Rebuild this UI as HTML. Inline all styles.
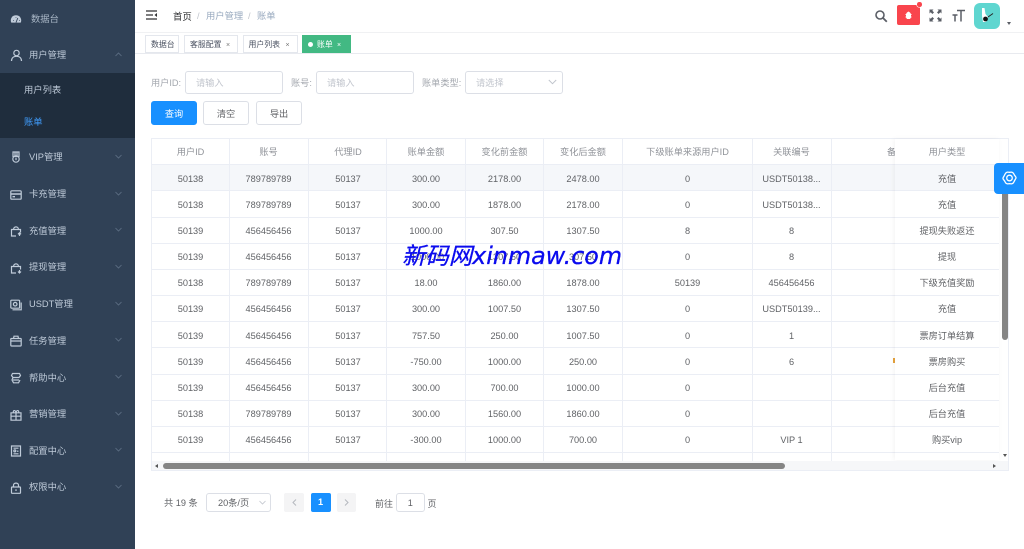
<!DOCTYPE html>
<html lang="zh"><head><meta charset="utf-8"><title>账单</title>
<style>
*{box-sizing:border-box}
html,body{margin:0;padding:0;width:1024px;height:549px;overflow:hidden;background:#fff}
body{font-family:"Liberation Sans","Noto Sans CJK SC",sans-serif;position:relative;color:#606266}
.a{position:absolute}
#root{position:absolute;left:0;top:0;width:1024px;height:549px;filter:blur(.35px)}
.side{left:0;top:0;width:135px;height:549px;background:#304156}
.sub{left:0;top:73px;width:135px;height:65px;background:#1f2d3d}
.m{position:absolute;left:29px;font-size:9.3px;line-height:14px;color:#bfcbd9;white-space:nowrap}
.ic{position:absolute;left:10px;width:12px;height:12px;fill:none;stroke:#bfcbd9;stroke-width:1.2}
.ch{position:absolute;left:115px;width:7px;height:5px;fill:none;stroke:#5f7186;stroke-width:.8}
.tag{position:absolute;top:35px;height:17.5px;border:1px solid #e4e7ed;background:#fff;font-size:7.9px;line-height:17px;color:#495060;padding-left:5px;white-space:nowrap}
.x{font-size:7px;color:#777;position:absolute;top:1px}
.lab{position:absolute;top:76px;font-size:9.2px;line-height:15px;color:#a3a7ae;white-space:nowrap}
.inp{position:absolute;top:71px;height:23px;border:1px solid #dcdfe6;border-radius:3px;font-size:9.2px;line-height:23px;color:#c0c4cc;padding-left:10px;background:#fff}
.btn{position:absolute;top:101px;width:46px;height:24px;border:1px solid #dcdfe6;border-radius:3px;font-size:9.2px;line-height:24px;text-align:center;color:#606266;background:#fff}
.tb{left:151px;top:138px;width:858px;height:333px;border:1px solid #ebeef5;overflow:hidden}
.r{position:absolute;left:151px;width:848px;height:1px;background:#ebeef5}
.v{position:absolute;top:139px;width:1px;height:322px;background:#ebeef5}
.row{position:absolute;left:152px;width:847px;height:14px;font-size:9.2px;line-height:14px;color:#606266}
.row span{position:absolute;top:0;text-align:center;white-space:nowrap}
.f{left:895px;width:104px;text-align:center}
.h{color:#909399}
.c1{left:0;width:77px}.c2{left:77px;width:79px}.c3{left:157px;width:78px}.c4{left:235px;width:78px}.c5{left:313px;width:79px}.c6{left:392px;width:78px}.c7{left:470px;width:131px}.c8{left:600px;width:79px}
.pg{position:absolute;top:493px;height:19px;font-size:9.2px;line-height:19px;text-align:center;border-radius:2px}
</style></head><body>
<div id="root">
<div class="a side"></div><div class="a sub"></div>

<svg class="ic" style="top:13px" viewBox="0 0 12 12"><path fill="#bfcbd9" stroke="none" d="M6 2.2C2.8 2.2.8 4.6.8 7.4c0 .9.2 1.6.5 2.2h9.4c.3-.6.5-1.3.5-2.2C11.200 4.6 9.2 2.2 6 2.2z"/><path stroke="#304156" stroke-width=".9" d="M6 9.5 7.8 5M3 7.5h.6M9 7.5h.6M6 4v.6"/></svg>
<div class="m" style="left:31px;top:11.5px;color:#a9b7c6">数据台</div>

<svg class="ic" style="top:49px;width:13px;height:13px" viewBox="0 0 13 13"><circle cx="6.5" cy="4" r="2.7"/><path d="M1.5 12c0-3 2-4.7 5-4.7s5 1.7 5 4.700"/></svg>
<div class="m" style="top:48px">用户管理</div>
<svg class="ch" style="top:52px" viewBox="0 0 7 5"><path d="M.5 4 3.5 1 6.5 4"/></svg>

<div class="m" style="left:24px;top:82.5px">用户列表</div>
<div class="m" style="left:24px;top:115px;color:#409eff">账单</div>

<svg class="ic" style="top:151px" viewBox="0 0 12 12"><path d="M3 1h6v4.5H3zM5 1v4.5M7 1v4.5"/><circle cx="6" cy="8" r="3.2"/><path d="M6 6.8v2.4"/></svg>
<div class="m" style="top:150px">VIP管理</div>
<svg class="ch" style="top:153.5px" viewBox="0 0 7 5"><path d="M.5 1 3.5 4 6.5 1"/></svg>

<svg class="ic" style="top:188.5px" viewBox="0 0 12 12"><rect x=".8" y="1.8" width="10.4" height="8.4" rx="1"/><path d="M.8 5h10.4M2.5 7.7h2.5" stroke-width="1.4"/></svg>
<div class="m" style="top:187px">卡充管理</div>
<svg class="ch" style="top:190.5px" viewBox="0 0 7 5"><path d="M.5 1 3.5 4 6.5 1"/></svg>

<svg class="ic" style="top:225px" viewBox="0 0 12 12"><path d="M6 11H1.5V4.5H10.5V7.5M3.5 4.5C3.5 1 8.5 1 8.5 4.5M9.5 11V8M8 9.300l1.5-1.5 1.5 1.5"/></svg>
<div class="m" style="top:223.5px">充值管理</div>
<svg class="ch" style="top:227px" viewBox="0 0 7 5"><path d="M.5 1 3.5 4 6.5 1"/></svg>

<svg class="ic" style="top:262px" viewBox="0 0 12 12"><path d="M6 11H1.5V4.5H10.5V7.5M3.5 4.5C3.5 1 8.5 1 8.5 4.5M9.5 8V11M8 9.5l1.5 1.5 1.5-1.5"/></svg>
<div class="m" style="top:260px">提现管理</div>
<svg class="ch" style="top:263.5px" viewBox="0 0 7 5"><path d="M.5 1 3.5 4 6.5 1"/></svg>

<svg class="ic" style="top:298.5px" viewBox="0 0 12 12"><rect x=".8" y="1.2" width="8.8" height="8" rx=".8"/><path d="M2.5 10.8h8.7V3.5"/><circle cx="5.2" cy="5.2" r="1.8"/></svg>
<div class="m" style="top:297px">USDT管理</div>
<svg class="ch" style="top:300.5px" viewBox="0 0 7 5"><path d="M.5 1 3.5 4 6.5 1"/></svg>

<svg class="ic" style="top:335px" viewBox="0 0 12 12"><rect x=".8" y="3.5" width="10.4" height="7.5" rx=".6"/><path d="M3.5 3.5 4 1.2h4L8.5 3.5M.8 6h10.4"/></svg>
<div class="m" style="top:333.5px">任务管理</div>
<svg class="ch" style="top:337px" viewBox="0 0 7 5"><path d="M.5 1 3.5 4 6.5 1"/></svg>

<svg class="ic" style="top:372px" viewBox="0 0 12 12"><path d="M2.5 1.5h7l1 2-1.5 2H3L1.5 3.5zM3 5.5l-1 2.5 1.5 2.8h5L10 8"/><path d="M3 8h6"/></svg>
<div class="m" style="top:370.5px">帮助中心</div>
<svg class="ch" style="top:373.5px" viewBox="0 0 7 5"><path d="M.5 1 3.5 4 6.5 1"/></svg>

<svg class="ic" style="top:409px" viewBox="0 0 12 12"><path d="M1 3.8h10v7.400H1zM1 7.2h10M6 3.8v7.400M3.5 3.8C2.5 1 5.5.6 6 3.8 6.5.6 9.5 1 8.5 3.8"/></svg>
<div class="m" style="top:407px">营销管理</div>
<svg class="ch" style="top:410.5px" viewBox="0 0 7 5"><path d="M.5 1 3.5 4 6.5 1"/></svg>

<svg class="ic" style="top:445px" viewBox="0 0 12 12"><path d="M1.5 1h9v10h-9zM3.5 3.2h5M3.5 8.8h5"/><circle cx="4.8" cy="5.9" r="1"/><path d="M7 6.2h1.5"/></svg>
<div class="m" style="top:443.5px">配置中心</div>
<svg class="ch" style="top:447px" viewBox="0 0 7 5"><path d="M.5 1 3.5 4 6.5 1"/></svg>

<svg class="ic" style="top:482px" viewBox="0 0 12 12"><rect x="1.5" y="5" width="9" height="6.3" rx=".6"/><path d="M3.5 5V3.2C3.5.4 8.5.4 8.5 3.2V5M6 7.3v1.7"/></svg>
<div class="m" style="top:480px">权限中心</div>
<svg class="ch" style="top:483.5px" viewBox="0 0 7 5"><path d="M.5 1 3.5 4 6.5 1"/></svg>

<!-- header -->
<svg class="a" style="left:146px;top:10px;width:11px;height:10px" viewBox="0 0 11 10"><path d="M0 1h11M0 5h7M0 9h11" stroke="#303133" stroke-width="1.3" fill="none"/><path d="M11 3 8.500 5 11 7z" fill="#303133"/></svg>
<div class="a" style="left:173px;top:9px;font-size:9.4px;line-height:15px;color:#303133;white-space:nowrap">首页</div>
<div class="a" style="left:197px;top:9px;font-size:9.2px;line-height:15px;color:#c0c4cc">/</div>
<div class="a" style="left:206px;top:9px;font-size:9.3px;line-height:15px;color:#97a8be;white-space:nowrap">用户管理</div>
<div class="a" style="left:248px;top:9px;font-size:9.2px;line-height:15px;color:#c0c4cc">/</div>
<div class="a" style="left:257px;top:9px;font-size:9.3px;line-height:15px;color:#97a8be;white-space:nowrap">账单</div>

<svg class="a" style="left:874px;top:9px;width:14px;height:14px" viewBox="0 0 14 14"><circle cx="6" cy="6" r="4" fill="none" stroke="#5a5e66" stroke-width="1.6"/><path d="M9 9l3.800 3.800" stroke="#5a5e66" stroke-width="1.8"/></svg>
<div class="a" style="left:897px;top:5px;width:23px;height:20px;background:#f9454d;border-radius:2px"></div>
<div class="a" style="left:917px;top:2px;width:4.5px;height:4.5px;background:#f9454d;border-radius:50%;box-shadow:0 0 0 .6px #fff"></div>
<svg class="a" style="left:904px;top:11px;width:9px;height:9px" viewBox="0 0 9 9"><path fill="#fff" d="M3 1.5 4.5.5 6 1.5 7 3v3.5L6 8H3L2 6.5V3z"/><path stroke="#fff" stroke-width=".6" d="M1 3.5h1.2M7 3.5h1M1 6h1M7 6h1"/></svg>
<svg class="a" style="left:929px;top:9px;width:13px;height:13px" viewBox="0 0 13 13"><path fill="#5a5e66" d="M.5.5h4L3.300 1.700 5 3.400 3.400 5 1.700 3.300.5 4.500zM12.500.5v4L11.300 3.300 9.600 5 8 3.400 9.700 1.700 8.500.5zM.5 12.500v-4l1.200 1.200L3.400 8 5 9.600 3.300 11.300 4.500 12.500zM12.500 12.500h-4l1.200-1.200L8 9.600 9.600 8l1.700 1.700 1.200-1.200z"/></svg>
<svg class="a" style="left:952px;top:9px;width:13px;height:13px" viewBox="0 0 13 13"><path fill="none" stroke="#5a5e66" stroke-width="1.5" d="M5 1.5h8M9 1.5V12.500M.5 6h5M3 6v6.500"/></svg>
<div class="a" style="left:974px;top:3px;width:26px;height:26px;border-radius:6px;background:#5fd6d0;overflow:hidden">
<svg width="26" height="26" viewBox="0 0 26 26"><path fill="#fff" d="M8 5h2.500l1 6 2.500 3-2 5H9l-1-6z"/><circle cx="11.5" cy="16" r="2.4" fill="#111"/><path d="M14 14l5-3.500" stroke="#222" stroke-width=".9"/></svg></div>
<div class="a" style="left:1007px;top:22px;width:0;height:0;border-left:2.5px solid transparent;border-right:2.5px solid transparent;border-top:3px solid #5a5e66"></div>

<!-- tags -->
<div class="a" style="left:135px;top:32px;width:889px;height:1px;background:#f0f1f3"></div>
<div class="a" style="left:135px;top:53px;width:889px;height:1px;background:#e8eaef"></div>
<div class="tag" style="left:145px;width:34px">数据台</div>
<div class="tag" style="left:184px;width:54px">客服配置<span class="x" style="left:41px">×</span></div>
<div class="tag" style="left:242.5px;width:55.5px">用户列表<span class="x" style="left:42px">×</span></div>
<div class="tag" style="left:302px;width:48.5px;background:#42b983;border-color:#42b983;color:#fff;padding-left:14px"><span class="a" style="left:5px;top:5.5px;width:5px;height:5px;border-radius:50%;background:#fff"></span>账单<span class="x" style="left:34px;color:#fff">×</span></div>

<!-- form -->
<div class="lab" style="left:151px">用户ID:</div>
<div class="inp" style="left:185px;width:98px">请输入</div>
<div class="lab" style="left:291px">账号:</div>
<div class="inp" style="left:316px;width:98px">请输入</div>
<div class="lab" style="left:422px">账单类型:</div>
<div class="inp" style="left:465px;width:98px">请选择</div>
<svg class="a" style="left:548px;top:79px;width:9px;height:6px" viewBox="0 0 9 6"><path d="M.8 1 4.5 4.7 8.2 1" fill="none" stroke="#c0c4cc"/></svg>
<div class="btn" style="left:151px;background:#1890ff;border-color:#1890ff;color:#fff">查询</div>
<div class="btn" style="left:203px">清空</div>
<div class="btn" style="left:256px">导出</div>

<!-- table -->
<div class="a tb"></div>
<div class="a" style="left:152px;top:165px;width:847px;height:26px;background:#f5f7fa"></div>
<div class="r" style="top:164px"></div><div class="r" style="top:190px"></div><div class="r" style="top:217px"></div><div class="r" style="top:243px"></div><div class="r" style="top:269px"></div><div class="r" style="top:295px"></div><div class="r" style="top:321px"></div><div class="r" style="top:347px"></div><div class="r" style="top:374px"></div><div class="r" style="top:400px"></div><div class="r" style="top:426px"></div><div class="r" style="top:452px"></div>
<div class="v" style="left:229px"></div><div class="v" style="left:308px"></div><div class="v" style="left:386px"></div><div class="v" style="left:465px"></div><div class="v" style="left:543px"></div><div class="v" style="left:622px"></div><div class="v" style="left:752px"></div><div class="v" style="left:831px"></div>

<div class="row h" style="top:145px"><span class="c1">用户ID</span><span class="c2">账号</span><span class="c3">代理ID</span><span class="c4">账单金额</span><span class="c5">变化前金额</span><span class="c6">变化后金额</span><span class="c7">下级账单来源用户ID</span><span class="c8">关联编号</span><span style="left:735px">备注</span></div>
<div class="row" style="top:172px"><span class="c1">50138</span><span class="c2">789789789</span><span class="c3">50137</span><span class="c4">300.00</span><span class="c5">2178.00</span><span class="c6">2478.00</span><span class="c7">0</span><span class="c8">USDT50138...</span></div>
<div class="row" style="top:198px"><span class="c1">50138</span><span class="c2">789789789</span><span class="c3">50137</span><span class="c4">300.00</span><span class="c5">1878.00</span><span class="c6">2178.00</span><span class="c7">0</span><span class="c8">USDT50138...</span></div>
<div class="row" style="top:224px"><span class="c1">50139</span><span class="c2">456456456</span><span class="c3">50137</span><span class="c4">1000.00</span><span class="c5">307.50</span><span class="c6">1307.50</span><span class="c7">8</span><span class="c8">8</span></div>
<div class="row" style="top:250px"><span class="c1">50139</span><span class="c2">456456456</span><span class="c3">50137</span><span class="c4">-1000.00</span><span class="c5">1307.50</span><span class="c6">307.50</span><span class="c7">0</span><span class="c8">8</span></div>
<div class="row" style="top:276px"><span class="c1">50138</span><span class="c2">789789789</span><span class="c3">50137</span><span class="c4">18.00</span><span class="c5">1860.00</span><span class="c6">1878.00</span><span class="c7">50139</span><span class="c8">456456456</span></div>
<div class="row" style="top:302px"><span class="c1">50139</span><span class="c2">456456456</span><span class="c3">50137</span><span class="c4">300.00</span><span class="c5">1007.50</span><span class="c6">1307.50</span><span class="c7">0</span><span class="c8">USDT50139...</span></div>
<div class="row" style="top:329px"><span class="c1">50139</span><span class="c2">456456456</span><span class="c3">50137</span><span class="c4">757.50</span><span class="c5">250.00</span><span class="c6">1007.50</span><span class="c7">0</span><span class="c8">1</span></div>
<div class="row" style="top:355px"><span class="c1">50139</span><span class="c2">456456456</span><span class="c3">50137</span><span class="c4">-750.00</span><span class="c5">1000.00</span><span class="c6">250.00</span><span class="c7">0</span><span class="c8">6</span></div>
<div class="row" style="top:381px"><span class="c1">50139</span><span class="c2">456456456</span><span class="c3">50137</span><span class="c4">300.00</span><span class="c5">700.00</span><span class="c6">1000.00</span><span class="c7">0</span></div>
<div class="row" style="top:407px"><span class="c1">50138</span><span class="c2">789789789</span><span class="c3">50137</span><span class="c4">300.00</span><span class="c5">1560.00</span><span class="c6">1860.00</span><span class="c7">0</span></div>
<div class="row" style="top:433px"><span class="c1">50139</span><span class="c2">456456456</span><span class="c3">50137</span><span class="c4">-300.00</span><span class="c5">1000.00</span><span class="c6">700.00</span><span class="c7">0</span><span class="c8">VIP 1</span></div>

<div class="a" style="left:893px;top:358px;width:2px;height:5px;background:#e6a23c"></div>

<!-- fixed column -->
<div class="a" style="left:895px;top:139px;width:104px;height:321px;background:#fff;box-shadow:-1px 0 5px rgba(0,0,0,.05)"></div>
<div class="r" style="left:895px;width:104px;top:164px"></div><div class="r" style="left:895px;width:104px;top:190px"></div><div class="r" style="left:895px;width:104px;top:217px"></div><div class="r" style="left:895px;width:104px;top:243px"></div><div class="r" style="left:895px;width:104px;top:269px"></div><div class="r" style="left:895px;width:104px;top:295px"></div><div class="r" style="left:895px;width:104px;top:321px"></div><div class="r" style="left:895px;width:104px;top:347px"></div><div class="r" style="left:895px;width:104px;top:374px"></div><div class="r" style="left:895px;width:104px;top:400px"></div><div class="r" style="left:895px;width:104px;top:426px"></div><div class="r" style="left:895px;width:104px;top:452px"></div>
<div class="a" style="left:895px;top:165px;width:104px;height:25px;background:#f5f7fa"></div>
<div class="row h f" style="top:145px">用户类型</div>
<div class="row f" style="top:172px">充值</div>
<div class="row f" style="top:198px">充值</div>
<div class="row f" style="top:224px">提现失败返还</div>
<div class="row f" style="top:250px">提现</div>
<div class="row f" style="top:276px">下级充值奖励</div>
<div class="row f" style="top:302px">充值</div>
<div class="row f" style="top:329px">票房订单结算</div>
<div class="row f" style="top:355px">票房购买</div>
<div class="row f" style="top:381px">后台充值</div>
<div class="row f" style="top:407px">后台充值</div>
<div class="row f" style="top:433px">购买vip</div>

<!-- scrollbars -->
<div class="a" style="left:152px;top:461px;width:856px;height:9px;background:#f6f7f9"></div>
<div class="a" style="left:163px;top:463px;width:622px;height:6px;background:#858585;border-radius:3px"></div>
<div class="a" style="left:155px;top:464px;width:0;height:0;border-top:2.5px solid transparent;border-bottom:2.5px solid transparent;border-right:3px solid #555"></div>
<div class="a" style="left:993px;top:464px;width:0;height:0;border-top:2.5px solid transparent;border-bottom:2.5px solid transparent;border-left:3px solid #555"></div>
<div class="a" style="left:1002px;top:190px;width:5.5px;height:150px;background:#858585;border-radius:0 0 3px 3px"></div>
<div class="a" style="left:1003px;top:454px;width:0;height:0;border-left:2.5px solid transparent;border-right:2.5px solid transparent;border-top:3px solid #555"></div>

<!-- settings -->
<div class="a" style="left:994px;top:163px;width:30px;height:31px;background:#1890ff;border-radius:4px 0 0 4px"></div>
<svg class="a" style="left:1002px;top:171px;width:15px;height:14px" viewBox="0 0 15 14"><path fill="none" stroke="#fff" stroke-width="1.3" stroke-linejoin="round" d="M4.5 1.5C5.5.8 6.5 1.300 7.5 1.300S9.5.8 10.5 1.5C11.8 2 11.8 3.300 12.5 4.200S14.300 6 14 7 12.800 9 12.5 9.800C11.8 10.700 11.8 12 10.5 12.5 9.5 13.200 8.5 12.700 7.5 12.700S5.5 13.200 4.5 12.5C3.200 12 3.200 10.700 2.5 9.800S.7 8 1 7 2.200 5 2.5 4.200C3.200 3.300 3.200 2 4.5 1.5z"/><circle cx="7.5" cy="7" r="2.8" fill="none" stroke="#fff" stroke-width="1.3"/></svg>

<!-- watermark -->
<div class="a" style="left:402px;top:242px;line-height:28px;color:#0a0aee;white-space:nowrap;font-family:'DejaVu Sans','Noto Sans CJK SC',sans-serif;font-style:italic;-webkit-text-stroke:.3px #0a0aee"><span style="font-size:23.4px">新码网</span><span style="font-size:23.8px">xinmaw.com</span></div>

<!-- pagination -->
<div class="a" style="left:164px;top:495.5px;font-size:9.2px;line-height:14px;color:#606266;white-space:nowrap">共 19 条</div>
<div class="pg" style="left:206px;width:65px;border:1px solid #dcdfe6;text-align:left;padding-left:11px;line-height:18px;border-radius:3px">20条/页</div>
<svg class="a" style="left:259px;top:500px;width:7px;height:5px" viewBox="0 0 7 5"><path d="M.5 1 3.5 4 6.5 1" fill="none" stroke="#c0c4cc" stroke-width=".8"/></svg>
<div class="pg" style="left:284px;width:20px;background:#f4f4f5"></div>
<svg class="a" style="left:292px;top:499px;width:5px;height:7px" viewBox="0 0 5 7"><path d="M4 .5 1 3.5 4 6.5" fill="none" stroke="#b5b8be"/></svg>
<div class="pg" style="left:310.5px;width:20px;background:#1890ff;color:#fff;font-weight:700">1</div>
<div class="pg" style="left:337px;width:19px;background:#f4f4f5"></div>
<svg class="a" style="left:344px;top:499px;width:5px;height:7px" viewBox="0 0 5 7"><path d="M1 .5 4 3.5 1 6.5" fill="none" stroke="#b5b8be"/></svg>
<div class="a" style="left:375px;top:496.5px;font-size:9px;line-height:14px;white-space:nowrap">前往</div>
<div class="pg" style="left:395.5px;width:29.5px;border:1px solid #dcdfe6;line-height:18px;border-radius:3px">1</div>
<div class="a" style="left:427.5px;top:496.5px;font-size:9px;line-height:14px;white-space:nowrap">页</div>
</div>
</body></html>
